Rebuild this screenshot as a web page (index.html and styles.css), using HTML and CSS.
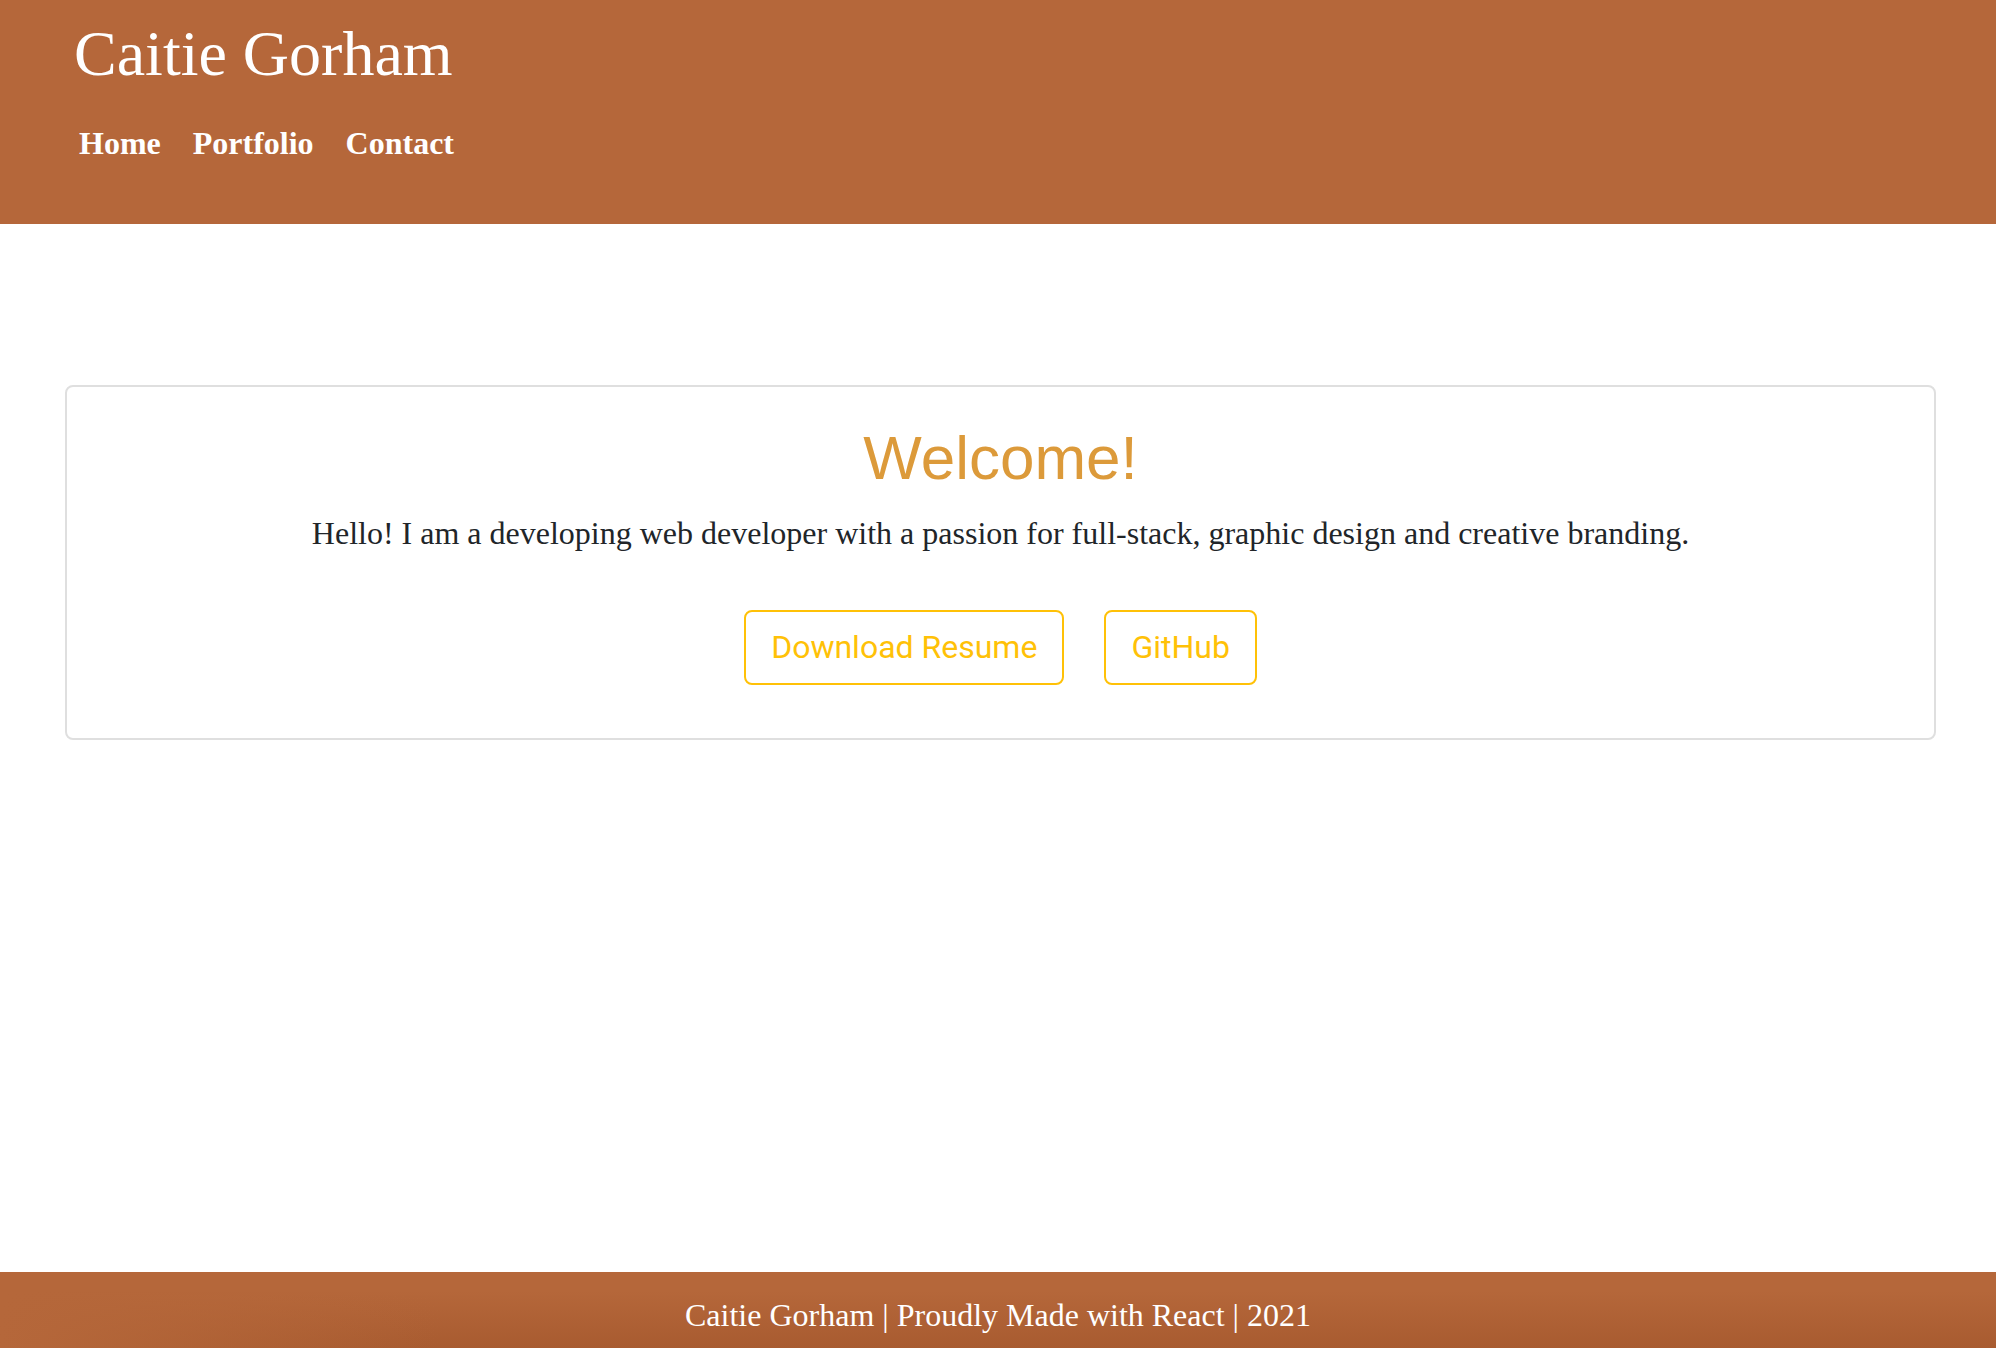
FILE: index.html
```html
<!DOCTYPE html>
<html lang="en">
<head>
<meta charset="utf-8">
<title>Caitie Gorham</title>
<link rel="stylesheet" href="styles.css">
</head>
<body>
<header class="site-header">
  <h1 class="site-title">Caitie Gorham</h1>
  <nav class="site-nav">
    <a href="#" class="nav-link">Home</a>
    <a href="#" class="nav-link">Portfolio</a>
    <a href="#" class="nav-link">Contact</a>
  </nav>
</header>
<main class="main">
  <section class="card">
    <h2 class="card-title">Welcome!</h2>
    <p class="card-text">Hello! I am a developing web developer with a passion for full-stack, graphic design and creative branding.</p>
    <div class="btn-row">
      <a href="#" class="btn">Download Resume</a>
      <a href="#" class="btn">GitHub</a>
    </div>
  </section>
</main>
<footer class="site-footer">Caitie Gorham | Proudly Made with React | 2021</footer>
</body>
</html>
```

FILE: styles.css
```css
html, body {
  margin: 0;
  padding: 0;
}
body {
  min-height: 100vh;
  display: flex;
  flex-direction: column;
  font-family: "Liberation Serif", "Times New Roman", serif;
  background: #fff;
}
.site-header {
  background: #b5673a;
  height: 224px;
  box-sizing: border-box;
  padding: 16px 0 0 74px;
}
.site-title {
  margin: 0;
  font-size: 64px;
  line-height: 76.8px;
  font-weight: normal;
  color: #fff;
}
.site-nav {
  margin-top: 26px;
  padding-left: 5px;
  display: flex;
  gap: 32px;
}
.nav-link {
  color: #fff;
  text-decoration: none;
  font-weight: bold;
  font-size: 32px;
  line-height: 48px;
}
.main {
  flex: 1;
}
.card {
  margin: 161px 60px 0 65px;
  border: 2px solid #dfdfdf;
  border-radius: 8px;
  padding: 34px 20px 53px;
  text-align: center;
}
.card-title {
  margin: 0 0 14px;
  font-family: "Liberation Sans", Arial, sans-serif;
  font-weight: normal;
  font-size: 62px;
  line-height: 74.4px;
  color: #dc9a3a;
}
.card-text {
  margin: 0 0 53px;
  font-size: 32px;
  line-height: 48px;
  color: #212529;
}
.btn-row {
  display: flex;
  justify-content: center;
  gap: 40px;
}
.btn {
  display: inline-block;
  font-family: Roboto, "Liberation Sans", sans-serif;
  font-size: 32px;
  line-height: 49px;
  padding: 11px 25px;
  border: 2px solid #ffc107;
  border-radius: 8px;
  color: #ffc107;
  text-decoration: none;
}
.site-footer {
  height: 76px;
  box-sizing: border-box;
  padding-top: 19px;
  text-align: center;
  color: #fff;
  font-size: 32px;
  line-height: 48px;
  background:
    linear-gradient(to right, #b5673a 0, rgba(181,103,58,0) 22%),
    linear-gradient(to bottom, #b5673a 25%, #a85b30 100%);
}
```
